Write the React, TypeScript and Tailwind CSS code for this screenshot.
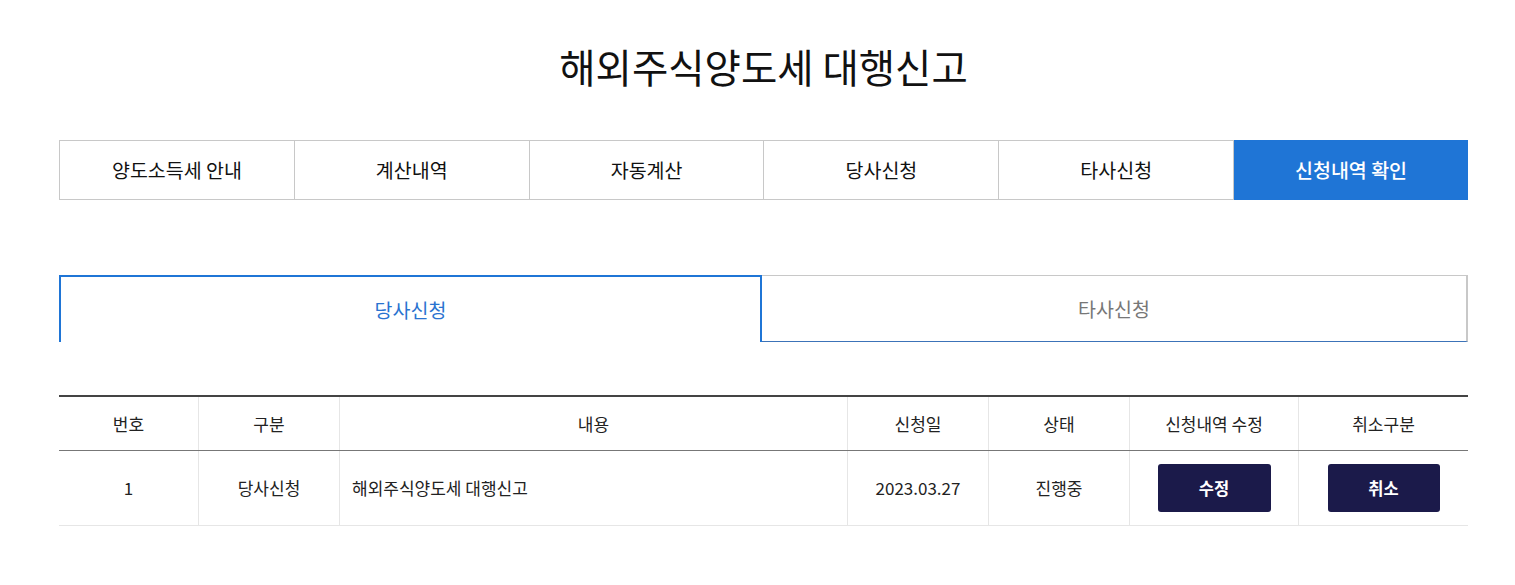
import React from "react";

const topTabs = ["양도소득세 안내", "계산내역", "자동계산", "당사신청", "타사신청", "신청내역 확인"];

const cols = [
  { label: "번호", w: "w-[140px]" },
  { label: "구분", w: "w-[141px]" },
  { label: "내용", w: "w-[508px]" },
  { label: "신청일", w: "w-[141px]" },
  { label: "상태", w: "w-[141px]" },
  { label: "신청내역 수정", w: "w-[169px]" },
  { label: "취소구분", w: "w-[169px]" },
];

export default function App() {
  return (
    <div
      className="w-[1515px] h-[585px] bg-white text-[#222]"
      style={{ fontFamily: '"Noto Sans CJK KR", "Noto Sans", sans-serif' }}
    >
      <div className="ml-[59px] w-[1409px]">
        <h1 className="pt-[37px] h-[140px] text-center text-[39.5px] leading-[58px] font-normal text-[#111]">
          해외주식양도세 대행신고
        </h1>

        <div className="flex h-[60px] border-y border-l border-[#c8c8c8]">
          {topTabs.map((t, i) => {
            const active = i === topTabs.length - 1;
            return (
              <div
                key={t}
                className={
                  active
                    ? "flex-1 flex items-center justify-center bg-[#1f75d6] text-white text-[19.5px] font-medium -my-px"
                    : "flex-1 flex items-center justify-center border-r border-[#c8c8c8] text-[19.5px] font-normal text-[#111]"
                }
              >
                {t}
              </div>
            );
          })}
        </div>

        <div className="mt-[75px] flex h-[67px]">
          <div className="w-[703px] border-t-2 border-x-2 border-[#1f75d6] flex items-center justify-center text-[19.5px] text-[#2a73d0]">
            당사신청
          </div>
          <div className="flex-1 border-t border-r-2 border-t-[#c8c8c8] border-r-[#c8c8c8] border-b border-b-[#3c73b8] flex items-center justify-center text-[19.5px] text-[#777]">
            타사신청
          </div>
        </div>

        <div className="mt-[53px] border-t-2 border-[#444]">
          <div className="flex h-[54px] border-b border-[#777]">
            {cols.map((c, i) => (
              <div
                key={c.label}
                className={`${c.w} flex items-center justify-center text-[17px] text-[#222] ${
                  i < cols.length - 1 ? "border-r border-[#e6e6e6]" : ""
                }`}
              >
                {c.label}
              </div>
            ))}
          </div>
          <div className="flex h-[75px] border-b border-[#e6e6e6] text-[17px] text-[#222]">
            <div className="w-[140px] flex items-center justify-center border-r border-[#e6e6e6]">1</div>
            <div className="w-[141px] flex items-center justify-center border-r border-[#e6e6e6]">당사신청</div>
            <div className="w-[508px] flex items-center pl-[12px] border-r border-[#e6e6e6]">
              해외주식양도세 대행신고
            </div>
            <div className="w-[141px] flex items-center justify-center border-r border-[#e6e6e6]">
              2023.03.27
            </div>
            <div className="w-[141px] flex items-center justify-center border-r border-[#e6e6e6]">진행중</div>
            <div className="w-[169px] flex items-center justify-center border-r border-[#e6e6e6]">
              <button className="w-[113px] h-[48px] rounded-[3px] bg-[#1b1a4a] text-white text-[16.5px] font-bold">
                수정
              </button>
            </div>
            <div className="w-[169px] flex items-center justify-center">
              <button className="w-[112px] h-[48px] rounded-[3px] bg-[#1b1a4a] text-white text-[16.5px] font-bold">
                취소
              </button>
            </div>
          </div>
        </div>
      </div>
    </div>
  );
}
